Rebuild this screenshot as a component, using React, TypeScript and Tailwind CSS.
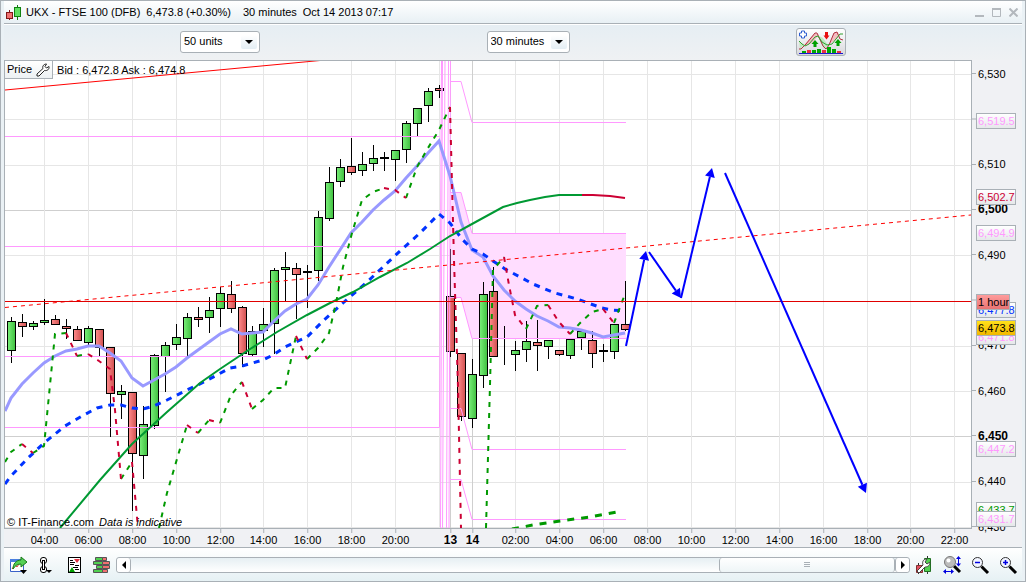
import type { ReactNode } from "react";

type Tone = "up" | "down" | "flat";
type Candle = [x: number, high: number, top: number, bottom: number, low: number, tone: Tone];

// x, high, body top, body bottom, low in chart units
const CANDLES: Candle[] = [
  [11, 317, 321, 350, 362, "up"],
  [22, 314, 322, 326, 336, "down"],
  [33, 321, 323, 326, 329, "up"],
  [44, 299, 320, 322, 324, "up"],
  [55, 315, 319, 324, 324, "down"],
  [66, 319, 326, 328, 338, "down"],
  [77, 326, 329, 340, 340, "down"],
  [88, 326, 328, 342, 346, "up"],
  [99, 329, 329, 347, 356, "down"],
  [110, 347, 347, 393, 436, "down"],
  [121, 385, 391, 394, 418, "up"],
  [132, 392, 392, 453, 510, "down"],
  [143, 406, 424, 455, 478, "up"],
  [154, 354, 355, 425, 428, "up"],
  [165, 342, 345, 356, 391, "up"],
  [176, 324, 337, 344, 349, "up"],
  [187, 313, 317, 338, 356, "up"],
  [198, 307, 317, 319, 326, "down"],
  [209, 297, 310, 317, 332, "up"],
  [220, 287, 293, 308, 326, "up"],
  [231, 281, 294, 308, 312, "down"],
  [242, 306, 307, 353, 366, "down"],
  [252, 326, 331, 354, 356, "up"],
  [263, 308, 324, 330, 346, "up"],
  [274, 268, 270, 323, 353, "up"],
  [285, 252, 267, 269, 300, "up"],
  [296, 263, 268, 274, 318, "down"],
  [307, 265, 271, 272, 307, "flat"],
  [318, 211, 217, 270, 280, "up"],
  [329, 167, 182, 218, 220, "up"],
  [340, 159, 167, 181, 186, "up"],
  [351, 138, 166, 172, 174, "down"],
  [362, 152, 164, 170, 175, "up"],
  [373, 145, 158, 163, 170, "up"],
  [384, 152, 157, 158, 170, "flat"],
  [395, 150, 150, 159, 180, "up"],
  [406, 121, 123, 149, 162, "up"],
  [417, 108, 108, 123, 136, "up"],
  [428, 88, 91, 105, 121, "up"],
  [439, 85, 88, 90, 97, "down"],
  [450, 249, 296, 351, 356, "down"],
  [461, 353, 353, 416, 420, "down"],
  [472, 359, 374, 418, 427, "up"],
  [483, 282, 294, 375, 387, "up"],
  [493, 267, 291, 356, 356, "down"],
  [504, 326, 357, 357, 364, "flat"],
  [515, 341, 350, 354, 370, "up"],
  [526, 321, 341, 349, 361, "up"],
  [537, 320, 342, 345, 370, "down"],
  [548, 340, 340, 346, 358, "up"],
  [559, 350, 350, 354, 355, "down"],
  [570, 339, 339, 355, 358, "up"],
  [581, 331, 331, 337, 349, "up"],
  [592, 331, 340, 353, 367, "down"],
  [603, 344, 350, 351, 361, "flat"],
  [614, 324, 324, 351, 358, "up"],
  [625, 281, 324, 329, 330, "down"],
];

const FAST_AVERAGE =
  "5,411 11,398 22,384 33,373 44,363 55,356 66,351 77,349 88,346 99,346 110,353 121,361 132,378 143,386 154,380 165,374 176,367 187,358 198,350 209,342 220,334 231,329 242,334 252,333 263,332 274,321 285,311 296,304 307,299 318,285 329,267 340,250 351,233 362,222 373,210 384,200 395,191 406,178 417,166 428,153 439,141 450,176 461,222 472,250 483,257 493,276 504,290 515,301 526,309 537,316 548,321 559,327 570,328 581,330 592,333 603,337 614,335 625,333";

const SLOW_AVERAGE =
  "5,484 11,476 27,459 44,443 65,426 82,416 97,408 110,405 121,405 132,408 143,409 154,406 167,400 187,390 200,384 217,375 230,368 242,366 263,360 273,355 285,347 307,337 323,321 343,303 367,282 383,267 400,251 420,233 439,214 450,223 462,239 472,249 483,254 493,261 505,269 520,277 533,284 555,293 577,299 602,308 612,310 625,311";

const LONG_AVERAGE =
  "60,528 100,480 132,444 167,412 200,383 220,369 247,351 277,332 307,315 330,303 353,292 380,277 407,263 430,249 450,236 472,224 503,207 517,203 530,200 545,197 559,195 582,195";

const TREND_UP = [
  "5,462 11,452 22,444",
  "33,453 44,446 55,334 66,333",
  "77,356 88,354",
  "121,479 132,462",
  "159,528 167,493 187,425",
  "198,433 209,420",
  "220,423 231,395 242,382",
  "252,409 263,400 274,388 285,388 296,336",
  "307,359 318,348 329,333 336,303 343,267 352,233 362,200 373,192 384,188",
  "406,198 417,167 428,148 439,130 450,107",
  "486,528 490,385 493,270 504,257",
  "526,329 537,306 548,305",
  "570,334 581,322 592,312 603,309",
  "614,323 625,294",
];

const TREND_DOWN = [
  "22,444 33,453",
  "66,333 77,356",
  "88,354 99,361 110,369 115,410 121,479",
  "132,462 138,528",
  "187,425 198,433",
  "209,420 220,423",
  "242,382 252,409",
  "296,336 307,359",
  "384,188 395,190 406,198",
  "450,107 454,260 458,387 461,528",
  "504,257 509,285 515,315 526,329",
  "548,305 559,322 570,334",
  "603,309 614,323",
];

const PIVOTS = [
  "450,81.5 461,81.5 472,122.5 626,122.5",
  "450,192.5 461,192.5 472,233.5 626,233.5",
  "450,297.5 461,297.5 472,338.5 626,338.5",
  "450,408.5 461,408.5 472,449.5 626,449.5",
  "450,479.5 461,479.5 472,519.5 626,519.5",
];

const ARROWS = [
  [626, 346, 646, 251],
  [649, 252, 681, 298],
  [681, 298, 712, 168],
  [725, 173, 866, 493],
];

const HOURS: { label: string; x: number; bold?: boolean }[] = [
  { label: "04:00", x: 44 },
  { label: "06:00", x: 88 },
  { label: "08:00", x: 132 },
  { label: "10:00", x: 176 },
  { label: "12:00", x: 220 },
  { label: "14:00", x: 263 },
  { label: "16:00", x: 307 },
  { label: "18:00", x: 351 },
  { label: "20:00", x: 395 },
  { label: "13", x: 450, bold: true },
  { label: "14", x: 472, bold: true },
  { label: "02:00", x: 515 },
  { label: "04:00", x: 559 },
  { label: "06:00", x: 603 },
  { label: "08:00", x: 647 },
  { label: "10:00", x: 691 },
  { label: "12:00", x: 735 },
  { label: "14:00", x: 779 },
  { label: "16:00", x: 823 },
  { label: "18:00", x: 867 },
  { label: "20:00", x: 910 },
  { label: "22:00", x: 954 },
];

const PRICES = [6530, 6520, 6510, 6500, 6490, 6480, 6470, 6460, 6450, 6440, 6430];
const MAJOR = [6500, 6450];

const PALE = "border-[#a9b0b6] bg-linear-to-b from-white to-[#e6e8ea]";

const TAGS: { price: number; text: string; className: string }[] = [
  { price: 6519.5, text: "6,519.5", className: `${PALE} text-[#ff99ff]` },
  { price: 6502.7, text: "6,502.7", className: `${PALE} text-[#cc0033]` },
  { price: 6494.9, text: "6,494.9", className: `${PALE} text-[#ff99ff]` },
  { price: 6477.8, text: "6,477.8", className: `${PALE} text-[#0033ff]` },
  { price: 6471.8, text: "6,471.8", className: `${PALE} text-[#ff99ff]` },
  { price: 6473.8, text: "6,473.8", className: "border-[#a9b0b6] bg-linear-to-b from-[#ffe11a] to-[#f2b800] text-black" },
  { price: 6479.6, text: "1 hour", className: "border-[#a9b0b6] bg-linear-to-b from-[#ff9c9c] to-[#e87373] text-black" },
  { price: 6447.2, text: "6,447.2", className: `${PALE} text-[#ff99ff]` },
  { price: 6433.7, text: "6,433.7", className: `${PALE} text-[#009900]` },
  { price: 6431.7, text: "6,431.7", className: `${PALE} text-[#ff99ff]` },
];

function priceToY(price: number) {
  return 74.5 + (6530 - price) * 4.53;
}

function topOf(price: number) {
  return `${((priceToY(price) - 61) / 469) * 100}%`;
}

function leftOf(x: number) {
  return `${((x + 0.5 - 4) / 968) * 100}%`;
}

function Arrow({ points }: { points: number[] }) {
  const [x1, y1, x2, y2] = points;
  const length = Math.hypot(x2 - x1, y2 - y1);
  const ux = (x2 - x1) / length;
  const uy = (y2 - y1) / length;
  const bx = x2 - ux * 9;
  const by = y2 - uy * 9;

  return (
    <g fill="#0000ff" stroke="#0000ff">
      <line x1={x1} y1={y1} x2={bx} y2={by} strokeWidth="2" />
      <polygon
        stroke="none"
        points={`${x2},${y2} ${bx - uy * 5},${by + ux * 5} ${bx + uy * 5},${by - ux * 5}`}
      />
    </g>
  );
}

function Chart() {
  return (
    <svg viewBox="5 61 966 467" className="block w-full" role="img" aria-label="UKX price chart">
      <defs>
        <linearGradient id="up">
          <stop offset="0" stopColor="#7af07a" />
          <stop offset="1" stopColor="#3fbf3f" />
        </linearGradient>
        <linearGradient id="down">
          <stop offset="0" stopColor="#ff8c8c" />
          <stop offset="1" stopColor="#d05050" />
        </linearGradient>
      </defs>

      <g shapeRendering="crispEdges">
        {PRICES.map((price) => (
          <line
            key={price}
            x1="5"
            x2="971"
            y1={Math.floor(priceToY(price)) + 0.5}
            y2={Math.floor(priceToY(price)) + 0.5}
            stroke={MAJOR.includes(price) ? "#cfcfcf" : "#e6e6e6"}
          />
        ))}
        {[...HOURS, { label: "22:00", x: 439, bold: false }].map((hour) => (
          <line
            key={hour.x}
            x1={hour.x + 0.5}
            x2={hour.x + 0.5}
            y1="61"
            y2="528"
            stroke={hour.bold ? "#cfcfcf" : "#e6e6e6"}
          />
        ))}
      </g>

      <polygon points="450,192.5 461,192.5 472,233.5 626,233.5 626,338.5 472,338.5 461,297.5 450,297.5" fill="#ffddff" />

      <g shapeRendering="crispEdges">
        {CANDLES.map(([x, high, top, bottom, low, tone]) => (
          <g key={x} stroke="#000000">
            <line x1={x + 0.5} x2={x + 0.5} y1={high} y2={low + 1} />
            <rect
              x={x - 3.5}
              y={top + 0.5}
              width="8"
              height={bottom - top}
              fill={tone === "up" ? "url(#up)" : tone === "down" ? "url(#down)" : "#000000"}
            />
          </g>
        ))}
      </g>

      <g fill="none" stroke="#ff99ff">
        <path d="M5 136.500H439.500M5 246.500H439.500M5 356.500H439.500M5 427.500H439.500L441.500 61" />
        <path d="M440.500 528L442.500 61M442.500 528L445 61M446.500 528L448.500 61M449 528L450.500 61" />
        {PIVOTS.map((points) => (
          <polyline key={points} points={points} />
        ))}
      </g>

      <g fill="none">
        <polyline points={FAST_AVERAGE} stroke="#9999ff" strokeWidth="3" />
        <polyline points={SLOW_AVERAGE} stroke="#0033ff" strokeWidth="3" strokeDasharray="6 6" />
        <polyline points={LONG_AVERAGE} stroke="#009933" strokeWidth="2" />
        <polyline points="582,195 593,195 610,196 625,198" stroke="#cc0033" strokeWidth="2" />
        <g strokeWidth="2" strokeDasharray="5 6">
          {TREND_UP.map((points) => (
            <polyline key={points} points={points} stroke="#009900" />
          ))}
          {TREND_DOWN.map((points) => (
            <polyline key={points} points={points} stroke="#cc0033" />
          ))}
        </g>
        <polyline
          points="512,529 533,525 560,521 590,517 622,511"
          stroke="#009900"
          strokeWidth="3"
          strokeDasharray="7 7"
        />
        <line x1="5" y1="90" x2="320" y2="60.5" stroke="#ff0000" />
        <line x1="5" y1="307.5" x2="971" y2="215" stroke="#ff0000" strokeDasharray="4 4" />
        <line x1="5" y1="301.5" x2="971" y2="301.5" stroke="#e00000" />
      </g>

      {ARROWS.map((points) => (
        <Arrow key={points.join()} points={points} />
      ))}
    </svg>
  );
}

function Dropdown({ label, value, className }: { label: string; value: string; className: string }) {
  return (
    <div className={`relative ${className}`}>
      <select
        aria-label={label}
        defaultValue={value}
        className="block h-[22px] w-full appearance-none rounded-[3px] border border-[#a9b0b6] bg-white pl-[3px] text-[11px] text-black"
      >
        <option>{value}</option>
      </select>
      <span className="pointer-events-none absolute top-1 right-[3px] flex h-3.5 w-4 items-center justify-center rounded-xs bg-linear-to-b from-white to-[#e4eef4]">
        <svg viewBox="0 0 8 4" className="h-1 w-2" aria-hidden>
          <path d="M0 0h8L4 4z" />
        </svg>
      </span>
    </div>
  );
}

function IconButton({ label, children }: { label: string; children: ReactNode }) {
  return (
    <button type="button" aria-label={label} className="flex size-5 shrink-0 items-center justify-center">
      <svg viewBox="0 0 20 20" className="size-5" fill="none" aria-hidden>
        {children}
      </svg>
    </button>
  );
}

function Magnifier({ children }: { children?: ReactNode }) {
  return (
    <>
      <path d="M11.500 11.500l6.500 6.500" stroke="#000000" strokeWidth="3" />
      <circle cx="7.500" cy="7.500" r="5" fill="#f2f5ff" stroke="#333333" />
      {children}
    </>
  );
}

function IndicatorIcon() {
  return (
    <svg viewBox="0 0 48 26" className="block w-full" fill="none" aria-hidden>
      <path d="M7 16L18 4l4 2-7 8-6 3z" fill="#f5bcc0" />
      <path d="M32 15l5-11 3-1 3 4-6 5z" fill="#f5bcc0" />
      <path d="M2 12l5 4-4 4zM20 6l6 3 5 7-4 4z" fill="#bfeabf" />
      <path d="M2 20h2l5-5L18 4h2l6 13 3 3 3-4 5-12 3-1 3 7 3 1" stroke="#b03040" />
      <path d="M2 12l3 3 3 2 4-2 6-7 3-1 4 6 5 3 5-1 4-5 4-5h3" stroke="#30a030" />
      <path
        d="M5 1.500h3v2h2v3H8v2H5v-2H3v-3h2z"
        transform="translate(-.5 .5)"
        fill="#ffffff"
        stroke="#3060d0"
      />
      <path d="M18 11l3.500 4h-2v3h-3v-3h-2zM41 10l3.500 4h-2v3h-3v-3h-2z" fill="#00a000" />
      <path d="M29.500 10.500l3-4h-1.500V3h-3v3.500h-1.500z" fill="#e81010" />
      <path d="M5 22h4v2H5zM15 21h4v3h-4zM20 20h4v4h-4zM30 18h4v6h-4zM35 20h4v4h-4z" fill="#00a800" />
      <path d="M10 21h4v3h-4zM25 21h4v3h-4zM40 22h4v2h-4z" fill="#e83040" />
      <path d="M2 24.500h44" stroke="#1818d0" />
    </svg>
  );
}

function TitleBar() {
  return (
    <header className="flex h-[23px] items-center border-b border-[#a9b0b6] bg-linear-to-b from-white to-[#e8f0f4] pr-1 text-[11px]">
      <svg viewBox="0 0 18 16" className="mr-1 h-4 w-[18px]" shapeRendering="crispEdges" aria-hidden>
        <path d="M5.500 6v10" stroke="#801818" />
        <rect x="2.500" y="8.500" width="6" height="6" fill="#f07070" stroke="#801818" />
        <path d="M13.500 1v15" stroke="#108010" />
        <rect x="10.500" y="3.500" width="6" height="9" fill="#60e060" stroke="#108010" />
      </svg>
      <h1 className="mr-1.5">UKX - FTSE 100 (DFB)</h1>
      <span className="mr-3">6,473.8 (+0.30%)</span>
      <span className="mr-1.5">30 minutes</span>
      <span>Oct 14 2013 07:17</span>
      <div className="ml-auto flex gap-2">
        <button type="button" aria-label="Minimise">
          <svg viewBox="0 0 9 9" className="size-[9px]" aria-hidden>
            <path d="M0 7h9v2H0z" fill="#b3b8bd" />
          </svg>
        </button>
        <button type="button" aria-label="Maximise">
          <svg viewBox="0 0 9 9" className="size-[9px]" fill="none" aria-hidden>
            <path d="M.5 1v7.500h8V1" stroke="#b3b8bd" />
            <path d="M0 0h9v2H0z" fill="#b3b8bd" />
          </svg>
        </button>
        <button type="button" aria-label="Close">
          <svg viewBox="0 0 9 9" className="size-[9px]" aria-hidden>
            <path d="M.5.5l8 8M8.500.5l-8 8" stroke="#b3b8bd" strokeWidth="2" />
          </svg>
        </button>
      </div>
    </header>
  );
}

function PriceAxis() {
  return (
    <div className="relative w-[50px] shrink-0 bg-[#f0f1f4]">
      {PRICES.map((price) => (
        <div
          key={price}
          className="absolute left-0 flex -translate-y-1/2 items-center gap-0.5"
          style={{ top: topOf(price) }}
        >
          <span className="h-px w-1 bg-[#a9b0b6]" />
          {price !== 6520 && price !== 6480 && (
            <span className={MAJOR.includes(price) ? "text-[12px] leading-4 font-bold" : "text-[11px] leading-4"}>
              {price.toLocaleString("en-US")}
            </span>
          )}
        </div>
      ))}
      {TAGS.map((tag) => (
        <span
          key={tag.text}
          className={`absolute left-1 h-4 -translate-y-1/2 border pl-px text-[11px] leading-[15px] ${tag.className}`}
          style={{ top: topOf(tag.price) }}
        >
          {tag.text}
        </span>
      ))}
    </div>
  );
}

function TimeAxis() {
  return (
    <div className="h-[19px] border-b border-[#a9b0b6] bg-[#f0f1f4] pr-[50px]">
      <div className="relative h-full">
        {HOURS.map((hour) => (
          <div
            key={hour.x}
            className="absolute top-0 flex -translate-x-1/2 flex-col items-center"
            style={{ left: leftOf(hour.x) }}
          >
            <span className="h-1 w-px bg-[#a9b0b6]" />
            <span className={hour.bold ? "text-[12px] leading-3.5 font-bold" : "text-[11px] leading-3.5"}>
              {hour.label}
            </span>
          </div>
        ))}
      </div>
    </div>
  );
}

function BottomBar() {
  return (
    <footer className="flex h-[33px] items-center bg-linear-to-b from-white to-[#e6f1f4] px-1">
      <div className="flex gap-2">
        <IconButton label="Export chart">
          <path d="M2.500 4.500h13v12h-13z" fill="#ffffff" stroke="#3a62c8" />
          <path d="M2 4h14v3H2z" fill="#4a7fe0" />
          <path d="M4 14l3-4 2 2 2-3" stroke="#e04040" />
          <path d="M5 14c0-5 3-9 8-9V2l6 5-6 5V9c-4 0-6 2-8 5z" fill="#55d055" stroke="#187818" />
          <path d="M12 15h7l-3.500 4z" fill="#000000" />
        </IconButton>
        <IconButton label="Link windows">
          <g stroke="#000000">
            <rect x="4.500" y="2.500" width="6" height="6" rx="2.500" fill="#ffffff" />
            <rect x="4.500" y="11.500" width="6" height="6" rx="2.500" fill="#ffffff" />
            <rect x="6.500" y="5.500" width="2" height="9" fill="#ffffff" />
          </g>
          <path d="M10 15h6l-3 3z" fill="#000000" />
        </IconButton>
        <IconButton label="Order list">
          <g shapeRendering="crispEdges">
            <path d="M4 3h12v14H4z" fill="#ffffff" />
            <path d="M4.500 2.500h12v15h-12z" stroke="#000000" />
            <path d="M6 5.500h3M6 7.500h5M6 9.500h4M11 10.500h4M9 12.500h5M11 14.500h4" stroke="#000000" />
          </g>
          <path d="M10 4h6l-3 4z" fill="#e03040" />
          <path d="M5 17h6l-3-5z" fill="#00a000" />
        </IconButton>
        <IconButton label="Order book">
          <g stroke="#555555">
            <path d="M3.500 2.500h7v3h-7zM1.500 6.500h9v3h-9zM4.500 10.500h6v3h-6zM1.500 14.500h9v3h-9z" fill="#50d050" />
            <path d="M10.500 2.500h4v3h-4zM10.500 6.500h7v3h-7zM10.500 10.500h7v3h-7zM10.500 14.500h5v3h-5z" fill="#f07070" />
          </g>
        </IconButton>
      </div>
      <div className="mx-1 flex h-4 flex-1 rounded-[3px] border border-[#a9b0b6] bg-linear-to-b from-[#e6eff3] to-white">
        <button
          type="button"
          aria-label="Scroll left"
          className="flex w-3.5 items-center justify-center rounded-[3px] border-r border-[#a9b0b6] bg-white"
        >
          <svg viewBox="0 0 4 8" className="h-2 w-1" aria-hidden>
            <path d="M4 0v8L0 4z" />
          </svg>
        </button>
        <div className="flex flex-1 justify-end">
          <div className="flex w-[23%] flex-col items-center justify-center gap-px rounded-[3px] border-x border-[#a9b0b6] bg-linear-to-b from-white to-[#eef5f7]">
            <span className="h-px w-1.5 bg-[#a9b0b6]" />
            <span className="h-px w-1.5 bg-[#a9b0b6]" />
            <span className="h-px w-1.5 bg-[#a9b0b6]" />
          </div>
        </div>
        <button
          type="button"
          aria-label="Scroll right"
          className="flex w-3.5 items-center justify-center rounded-[3px] border-l border-[#a9b0b6] bg-white"
        >
          <svg viewBox="0 0 4 8" className="h-2 w-1" aria-hidden>
            <path d="M0 0v8l4-4z" />
          </svg>
        </button>
      </div>
      <div className="flex gap-2">
        <IconButton label="Chart settings">
          <path d="M4.500 8v11M13.500 1v18" stroke="#333333" />
          <path d="M2.500 10.500h6v7h-6z" fill="#e05060" stroke="#803030" />
          <path d="M10.500 3.500h6v13h-6z" fill="#50d050" stroke="#207020" />
          <path
            d="M3 16l6-6c-1-3 0-6 4-6l-2 3 2 2 3-2c0 4-3 5-5 5l-6 6z"
            fill="#ffffff"
            stroke="#444444"
          />
        </IconButton>
        <IconButton label="Zoom axes">
          <path d="M12 11l6 6" stroke="#000000" strokeWidth="3" />
          <circle cx="8" cy="7" r="5.500" fill="#bcbcbc" stroke="#777777" />
          <circle cx="6.500" cy="5.500" r="2" fill="#ffffff" />
          <path d="M16.500 2v8M3 16.500h7" stroke="#0000e0" strokeWidth="1" />
          <path d="M14 4l2.500-3L19 4zM14 8.500l2.500 3 2.500-3zM4 14v5l-3-2.500zM9 14v5l3-2.500z" fill="#0000e0" />
        </IconButton>
        <IconButton label="Zoom out">
          <Magnifier>
            <path d="M5 7.500h5" stroke="#0000e0" strokeWidth="1.500" />
          </Magnifier>
        </IconButton>
        <IconButton label="Zoom in">
          <Magnifier>
            <path d="M5 7.500h5M7.500 5v5" stroke="#0000e0" strokeWidth="1.500" />
          </Magnifier>
        </IconButton>
      </div>
    </footer>
  );
}

export default function App() {
  return (
    <main className="border border-[#a9b0b6] bg-[#eaf1f5] px-[3px] font-['Liberation_Sans',Arial,sans-serif] text-black">
      <TitleBar />
      <div className="flex h-9 items-center justify-between border-t border-white bg-linear-to-b from-[#e6eef3] to-[#eff1f3] px-44 pb-0.5">
        <Dropdown label="Number of units" value="50 units" className="w-20" />
        <Dropdown label="Timeframe" value="30 minutes" className="w-[83px]" />
        <button
          type="button"
          aria-label="Indicators"
          className="h-7 w-[50px] rounded-[3px] border border-[#a9b0b6] bg-linear-to-b from-white to-[#d8d8dc]"
        >
          <IndicatorIcon />
        </button>
      </div>
      <section className="flex">
        <div className="relative min-w-0 flex-1 border border-[#a9b0b6] bg-white">
          <Chart />
          <div className="absolute top-0 left-0 flex items-center gap-1 text-[11px]">
            <button
              type="button"
              className="flex h-[18px] items-center gap-1 border-r border-b border-[#a9b0b6] bg-linear-to-b from-white to-[#edf1f3] px-0.5"
            >
              Price
              <svg viewBox="0 0 14 14" className="size-3.5" aria-hidden>
                <path
                  d="M1 11l6-5.500C6 3 8 1 10.500 1L9 3.500 10.500 5 13 3.500C13.500 6.500 11 8 8.500 7.500L3 13H1z"
                  fill="#ffffff"
                  stroke="#222222"
                />
              </svg>
            </button>
            <span>Bid : 6,472.8 Ask : 6,474.8</span>
          </div>
          <p className="absolute bottom-0 left-0.5 text-[11px] leading-3">
            © IT-Finance.com <i className="ml-0.5">Data is indicative</i>
          </p>
        </div>
        <PriceAxis />
      </section>
      <TimeAxis />
      <BottomBar />
    </main>
  );
}
